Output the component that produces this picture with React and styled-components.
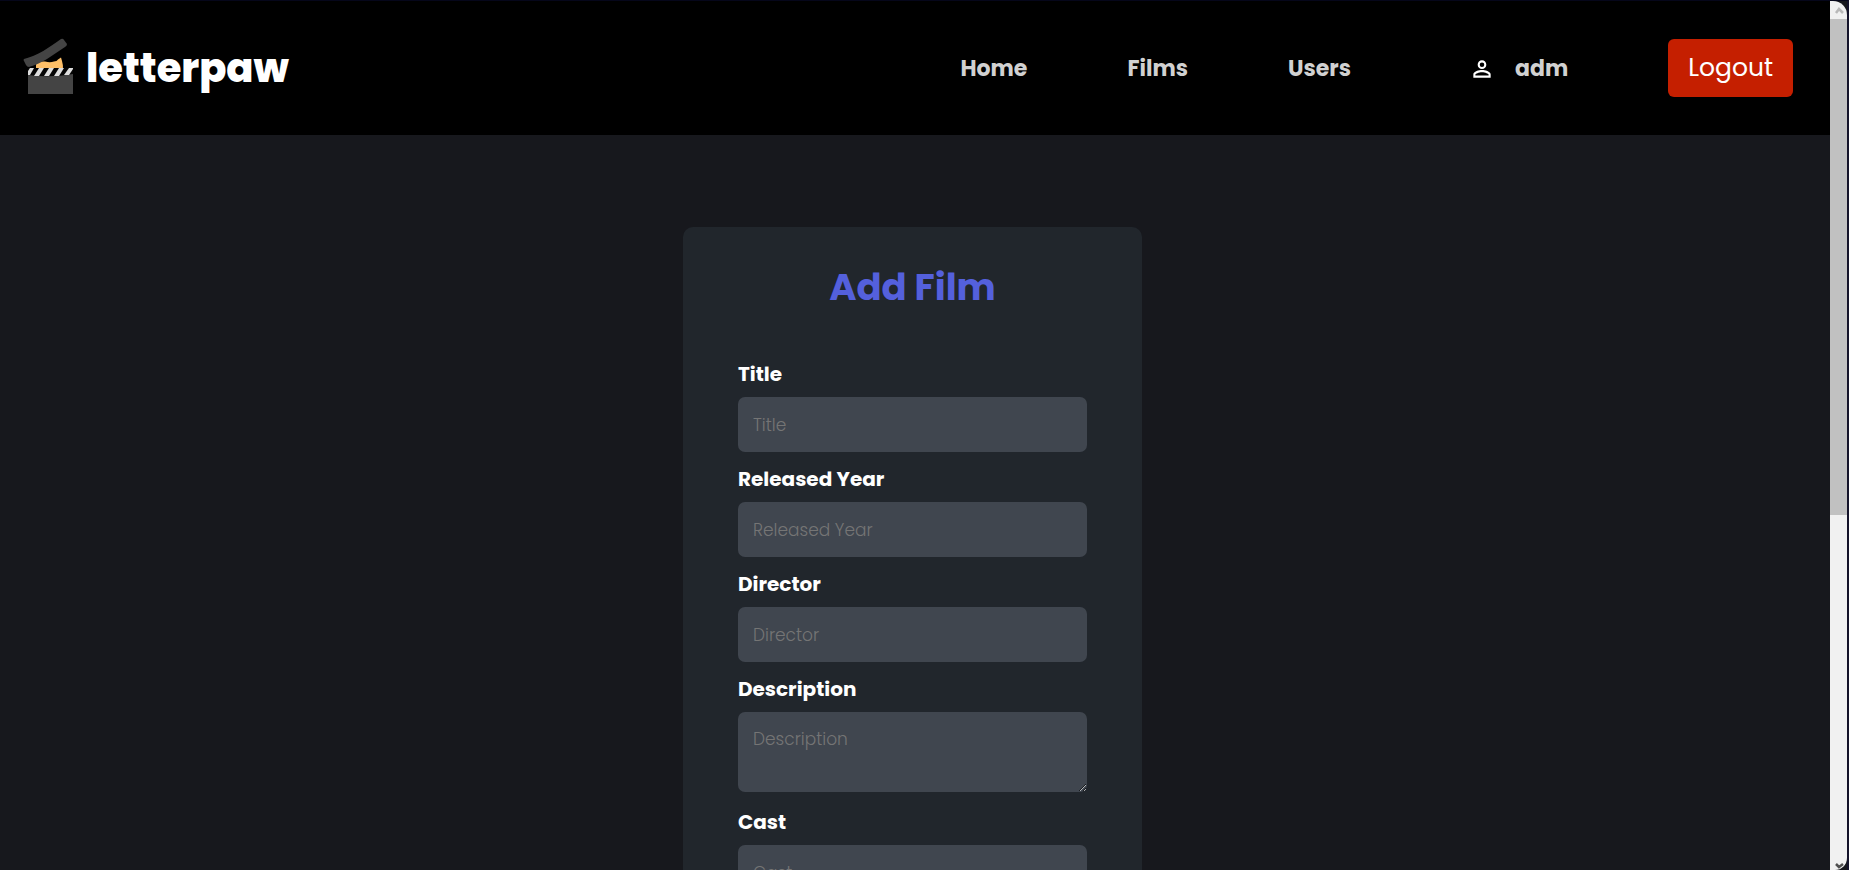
import React from "react";
import styled, { createGlobalStyle } from "styled-components";
import { MdPersonOutline } from "react-icons/md";

const GlobalStyle = createGlobalStyle`
  *, *::before, *::after { box-sizing: border-box; }
  body {
    margin: 0;
    background: #17181d;
    color: #fff;
    font-family: Poppins, Inter, "Liberation Sans", sans-serif;
  }
`;

const Window = styled.div`
  display: flex;
  height: 100vh;
  overflow: hidden;
  background: #17181d;
  border-top: 1px solid #05061a;
  border-right: 2px solid #14132a;
`;

const Page = styled.div`
  flex: 1;
  min-width: 0;
  overflow: hidden;
`;

const Header = styled.header`
  display: flex;
  align-items: center;
  justify-content: space-between;
  height: 134px;
  padding: 0 37px 0 23px;
  background: #000;
`;

const Brand = styled.a`
  display: flex;
  align-items: flex-start;
  gap: 12px;
  color: #fff;
  font-size: 40px;
  font-weight: 800;
  line-height: 60px;
  text-decoration: none;
`;

const Nav = styled.nav`
  display: flex;
  align-items: center;
  gap: 100px;
`;

const NavLink = styled.a`
  display: flex;
  align-items: center;
  gap: 20px;
  padding-top: 2px;
  color: #d1d1d1;
  font-size: 22px;
  font-weight: 700;
  line-height: 36px;
  text-decoration: none;
`;

const UserLink = styled(NavLink)`
  padding-left: 18px;

  svg {
    color: #fff;
  }
`;

const LogoutButton = styled.button`
  height: 58px;
  padding: 0 20px;
  border: 0;
  border-radius: 6px;
  background: #c51f00;
  color: #fff;
  font-family: inherit;
  font-size: 25px;
  line-height: 38px;
`;

const Main = styled.main`
  display: flex;
  justify-content: center;
  padding: 92px 5px 92px 0;
`;

const Card = styled.form`
  width: 459px;
  padding: 32px 55px 48px;
  border-radius: 10px;
  background: #21262c;
`;

const Heading = styled.h1`
  margin: 0 0 44px;
  color: #5460dc;
  font-size: 37px;
  font-weight: 700;
  line-height: 56px;
  text-align: center;
`;

const Field = styled.div`
  display: flex;
  flex-direction: column;
  gap: 8px;
  margin-bottom: ${({ $tall }) => ($tall ? 15 : 12)}px;
`;

const Label = styled.label`
  font-size: 20px;
  font-weight: 700;
  line-height: 30px;
`;

const Input = styled.input`
  width: 100%;
  height: 55px;
  padding: 15px;
  border: 0;
  border-radius: 7px;
  background: #40464f;
  color: #fff;
  font-family: inherit;
  font-size: 17px;
  font-weight: 300;
  line-height: 25px;

  &::placeholder {
    color: #757575;
    opacity: 1;
  }
`;

const TextArea = styled(Input)`
  display: block;
  height: 80px;
  resize: both;
`;

const ScrollTrack = styled.div`
  display: flex;
  flex-direction: column;
  width: 17px;
  border-radius: 0 14px 12px 0;
  background: #f1f1f1;
  overflow: hidden;
`;

const ScrollArrow = styled.svg`
  display: block;
  width: 17px;
  height: 18px;
  fill: none;
  stroke: ${({ $dim }) => ($dim ? "#b9b9b9" : "#505050")};
  stroke-width: 2.5;
`;

const ScrollThumb = styled.div`
  flex: 496;
  background: #c1c1c1;
`;

const ScrollRest = styled.div`
  flex: 337;
`;

const fields = [
  { id: "title", label: "Title" },
  { id: "year", label: "Released Year" },
  { id: "director", label: "Director" },
  { id: "description", label: "Description", tall: true },
  { id: "cast", label: "Cast" },
];

function Logo() {
  return (
    <svg width="51" height="57" viewBox="0 0 51 57" aria-hidden="true">
      <path
        d="M13 31V27Q14 23 18 23.500H22Q27 25 31 23.500Q34 23.500 35 21.500L38 19.500L39 23Q40 26 40 31Z"
        fill="#fdbf68"
      />
      <path
        d="M1 21C14 18 27 9 38 1Q40 0 41 2L44 6Q44 8 42 9C30 17 18 26 6 29Q4 29 3 27L1 23Q0 22 1 21Z"
        fill="#444"
      />
      <path d="M5 30H50V56H5Z" fill="#444" />
      <path d="M5 30H50V36Q28 40 5 37Z" fill="#050505" />
      <g fill="#ddd">
        <path d="M5 33L7 30H11L7 37H5Z" />
        <path d="M16 30H21L16 38H11Z" />
        <path d="M26 30H31L26 38H21Z" />
        <path d="M36 30H41L36 38H31Z" />
        <path d="M46 30H50V31L46 37H41Z" />
      </g>
    </svg>
  );
}

export default function App() {
  return (
    <>
      <GlobalStyle />
      <Window>
        <Page>
          <Header>
            <Brand href="#">
              <Logo />
              letterpaw
            </Brand>
            <Nav>
              <NavLink href="#">Home</NavLink>
              <NavLink href="#">Films</NavLink>
              <NavLink href="#">Users</NavLink>
              <UserLink href="#">
                <MdPersonOutline size={26} />
                adm
              </UserLink>
              <LogoutButton type="button">Logout</LogoutButton>
            </Nav>
          </Header>
          <Main>
            <Card>
              <Heading>Add Film</Heading>
              {fields.map(({ id, label, tall }) => (
                <Field key={id} $tall={tall}>
                  <Label htmlFor={id}>{label}</Label>
                  {tall ? (
                    <TextArea as="textarea" id={id} placeholder={label} />
                  ) : (
                    <Input id={id} type="text" placeholder={label} />
                  )}
                </Field>
              ))}
            </Card>
          </Main>
        </Page>
        <ScrollTrack aria-hidden="true">
          <ScrollArrow $dim viewBox="0 0 17 18">
            <path d="M6 12L9 8L13 12" />
          </ScrollArrow>
          <ScrollThumb />
          <ScrollRest />
          <ScrollArrow viewBox="0 0 17 18">
            <path d="M6 12L9 15L13 12" />
          </ScrollArrow>
        </ScrollTrack>
      </Window>
    </>
  );
}
